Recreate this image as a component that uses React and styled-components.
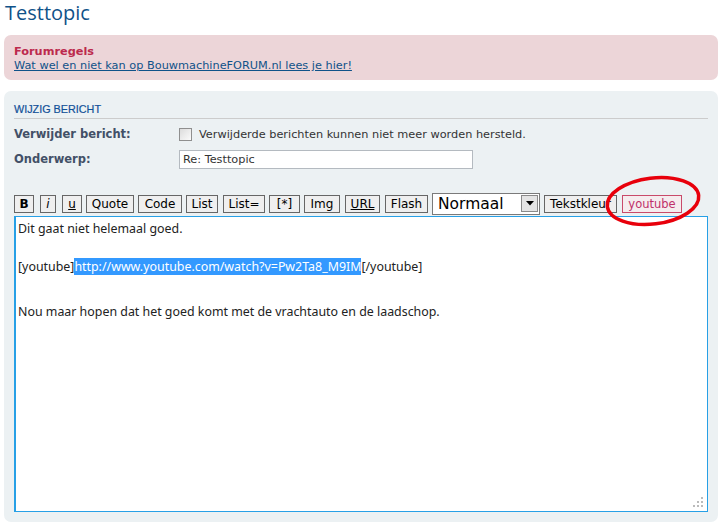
import React from "react";
import styled, { createGlobalStyle } from "styled-components";

const Global = createGlobalStyle`
  html, body { margin: 0; padding: 0; background: #fff; }
  body { font-family: "DejaVu Sans", Verdana, sans-serif; font-size: 11.3px; color: #333; }
`;

const Page = styled.div`
  width: 722px;
  height: 524px;
  overflow: hidden;
  padding: 0 4px;
  box-sizing: border-box;
`;

const Title = styled.h2`
  margin: 0;
  padding: 1px 0 0 1px;
  height: 34px;
  box-sizing: border-box;
  font-family: "Open Sans", "DejaVu Sans", sans-serif;
  font-weight: 400;
  font-size: 20px;
  line-height: 24px;
  color: #105289;
`;

const Rules = styled.div`
  background: #ecd5d8;
  border-radius: 7px;
  padding: 10px 10px 7px;
  height: 45px;
  box-sizing: border-box;
  margin: 1px 0 11px;
  line-height: 14px;
`;

const RulesTitle = styled.div`
  color: #bc2a4d;
  font-weight: bold;
  font-size: 11.3px;
`;

const RulesLink = styled.a`
  color: #105289;
  text-decoration: underline;
  font-size: 11.3px;
`;

const Panel = styled.div`
  background: #ecf1f3;
  border-radius: 7px;
  padding: 0 10px 10px;
  position: relative;
`;

const PanelHead = styled.h3`
  margin: 0;
  padding: 12px 0 3px;
  border-bottom: 1px solid #ccc;
  font-family: "Liberation Sans", Arial, sans-serif;
  font-weight: 400;
  font-size: 10.8px;
  line-height: 12px;
  text-transform: uppercase;
  color: #115098;
  -webkit-text-stroke: 0.2px #115098;
`;

const Row = styled.div`
  display: grid;
  grid-template-columns: 165px 1fr;
  align-items: center;
  height: ${(p) => p.$h}px;
`;

const Label = styled.label`
  font-weight: bold;
  color: #425067;
  font-size: 11.5px;
`;

const CheckWrap = styled.div`
  display: flex;
  align-items: center;
  gap: 7px;
`;

const Check = styled.span`
  width: 11px;
  height: 11px;
  border: 1px solid #8f8f8f;
  background: linear-gradient(135deg, #dcdcdc, #fbfbfb);
  display: inline-block;
`;

const Text = styled.span`
  color: #333;
  font-size: 11.3px;
`;

const Input = styled.div`
  width: 294px;
  height: 19px;
  box-sizing: border-box;
  border: 1px solid #b4bac0;
  background: #fff;
  padding: 0 3px;
  line-height: 17px;
  font-size: 11.3px;
  color: #333;
`;

const Toolbar = styled.div`
  display: flex;
  align-items: center;
  gap: 4px;
  margin-top: 22px;
  height: 25px;
`;

const Btn = styled.span`
  display: inline-flex;
  align-items: center;
  justify-content: center;
  height: 18px;
  box-sizing: border-box;
  width: ${(p) => p.$w}px;
  border: 1px solid ${(p) => (p.$pink ? "#c94a6a" : "#666")};
  background: ${(p) => (p.$pink ? "#f5ecee" : "#efefef")};
  color: ${(p) => (p.$pink ? "#c0306a" : "#000")};
  font-size: ${(p) => (p.$pink ? 11.5 : 12)}px;
  font-weight: ${(p) => (p.$bold ? "bold" : "normal")};
  font-style: ${(p) => (p.$italic ? "italic" : "normal")};
  text-decoration: ${(p) => (p.$under ? "underline" : "none")};
  margin-right: ${(p) => p.$mr || 0}px;
`;

const Select = styled.div`
  width: 108px;
  height: 22px;
  box-sizing: border-box;
  border: 1px solid #7a7a7a;
  background: #fff;
  display: flex;
  align-items: center;
  justify-content: space-between;
  padding: 0 1px 0 5px;
  font-size: 15.5px;
  color: #000;
`;

const Arrow = styled.span`
  width: 17px;
  height: 17px;
  box-sizing: border-box;
  border: 1px solid #8a8a8a;
  background: #e4e4e4;
  display: flex;
  align-items: center;
  justify-content: center;
`;

const Editor = styled.div`
  position: relative;
  background: #fff;
  border: 1px solid #27a0e6;
  border-left-width: 2px;
  height: 296px;
  box-sizing: border-box;
  padding: 4px 2px;
  font-family: "Noto Sans", "DejaVu Sans", sans-serif;
  font-size: 12.4px;
  color: #222;
`;

const Line = styled.div`
  height: 16px;
  line-height: 16px;
  margin-bottom: ${(p) => p.$mb || 0}px;
  white-space: pre;
`;

const Sel = styled.span`
  background: #3399ff;
  color: #fff;
`;

const Grip = styled.svg`
  position: absolute;
  right: 4px;
  bottom: 4px;
`;

const Circle = styled.svg`
  position: absolute;
  left: 593px;
  top: 81px;
  pointer-events: none;
`;

export default function App() {
  return (
    <Page>
      <Global />
      <Title>Testtopic</Title>
      <Rules>
        <RulesTitle>Forumregels</RulesTitle>
        <RulesLink href="#">Wat wel en niet kan op BouwmachineFORUM.nl lees je hier!</RulesLink>
      </Rules>
      <Panel>
        <PanelHead>Wijzig bericht</PanelHead>
        <Row $h={30}>
          <Label>Verwijder bericht:</Label>
          <CheckWrap>
            <Check />
            <Text>Verwijderde berichten kunnen niet meer worden hersteld.</Text>
          </CheckWrap>
        </Row>
        <Row $h={20}>
          <Label>Onderwerp:</Label>
          <Input>Re: Testtopic</Input>
        </Row>
        <Toolbar>
          <Btn $w={20} $mr={2} $bold>B</Btn>
          <Btn $w={16} $mr={2} $italic>i</Btn>
          <Btn $w={20} $under>u</Btn>
          <Btn $w={48}>Quote</Btn>
          <Btn $w={44}>Code</Btn>
          <Btn $w={32} $mr={1}>List</Btn>
          <Btn $w={42}>List=</Btn>
          <Btn $w={31}>[*]</Btn>
          <Btn $w={36} $mr={1}>Img</Btn>
          <Btn $w={35} $mr={1} $under>URL</Btn>
          <Btn $w={43}>Flash</Btn>
          <Select>
            Normaal
            <Arrow>
              <svg width="8" height="5" viewBox="0 0 8 5">
                <path d="M0 0h8L4 4.5z" fill="#000" />
              </svg>
            </Arrow>
          </Select>
          <Btn $w={73} $mr={1}>Tekstkleur</Btn>
          <Btn $w={60} $pink>youtube</Btn>
        </Toolbar>
        <Editor>
          <Line $mb={22}>Dit gaat niet helemaal goed.</Line>
          <Line $mb={29}>
            [youtube]<Sel>http://www.youtube.com/watch?v=Pw2Ta8_M9IM</Sel>[/youtube]
          </Line>
          <Line>Nou maar hopen dat het goed komt met de vrachtauto en de laadschop.</Line>
          <Grip width="10" height="10" viewBox="0 0 10 10">
            <rect x="8" y="0" width="2" height="2" fill="#bbb" />
            <rect x="4" y="4" width="2" height="2" fill="#bbb" />
            <rect x="8" y="4" width="2" height="2" fill="#bbb" />
            <rect x="0" y="8" width="2" height="2" fill="#bbb" />
            <rect x="4" y="8" width="2" height="2" fill="#bbb" />
            <rect x="8" y="8" width="2" height="2" fill="#bbb" />
          </Grip>
        </Editor>
        <Circle width="112" height="60" viewBox="0 0 112 60">
          <ellipse cx="56" cy="29" rx="46" ry="23" transform="rotate(-7 56 29)" fill="none" stroke="#e8000b" strokeWidth="3.5" />
        </Circle>
      </Panel>
    </Page>
  );
}
